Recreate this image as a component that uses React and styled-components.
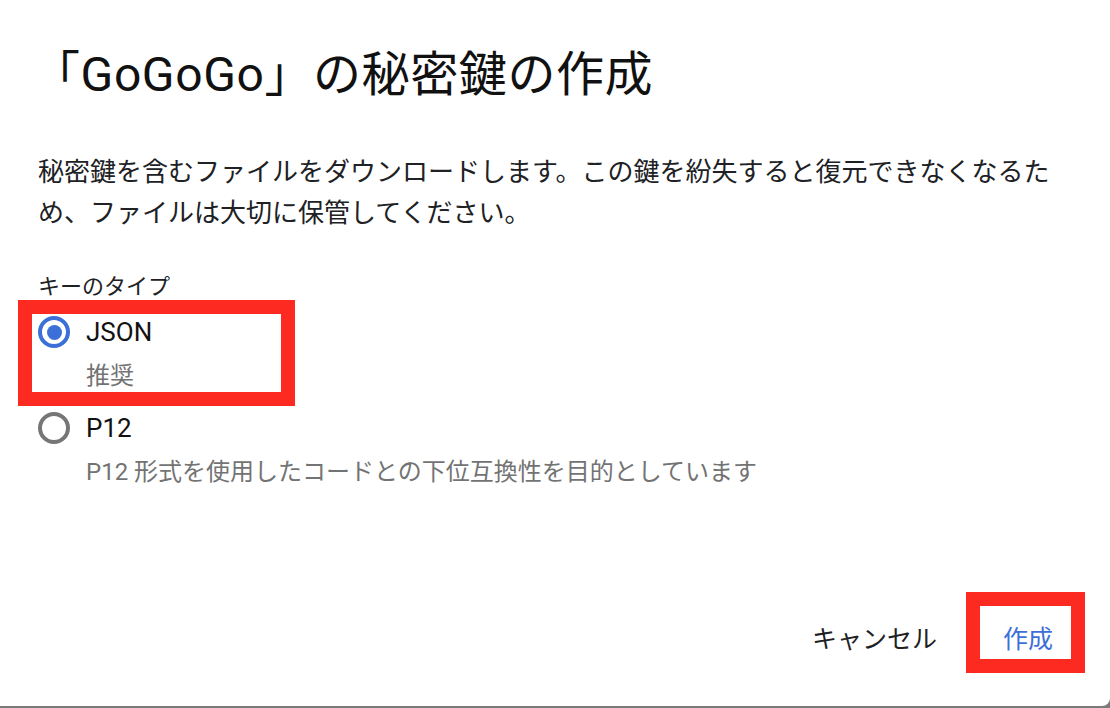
import React from 'react';
import styled, { createGlobalStyle } from 'styled-components';

const GlobalStyle = createGlobalStyle`
    html, body {
        margin: 0;
        padding: 0;
        background: #7b7b7b;
    }
    body {
        font-family: Roboto, "Noto Sans CJK JP", sans-serif;
        color: #202124;
    }
`;

function Radio({ checked, label, hint, highlight }) {
    return (
        <Option>
            {highlight && <Highlight style={highlight} />}
            <OptionRow>
                <RadioCircle checked={checked} />
                <OptionLabel>{label}</OptionLabel>
            </OptionRow>
            <OptionHint>{hint}</OptionHint>
        </Option>
    );
}

export default function App() {
    return (
        <>
            <GlobalStyle />
            <Dialog>
                <Title>「GoGoGo」の秘密鍵の作成</Title>
                <Description>
                    秘密鍵を含むファイルをダウンロードします。この鍵を紛失すると復元できなくなるため、ファイルは大切に保管してください。
                </Description>
                <Fieldset>
                    <Legend>キーのタイプ</Legend>
                    <Radio
                        checked
                        label="JSON"
                        hint="推奨"
                        highlight={{ top: -16, left: -20, width: 277, height: 106 }}
                    />
                    <Radio
                        label="P12"
                        hint="P12 形式を使用したコードとの下位互換性を目的としています"
                    />
                </Fieldset>
                <Footer>
                    <Button>キャンセル</Button>
                    <Button primary>
                        作成
                        <Highlight style={{ top: -17, left: -21, width: 119, height: 81 }} />
                    </Button>
                </Footer>
            </Dialog>
        </>
    );
}

const Dialog = styled.div`
    box-sizing: border-box;
    width: 1110px;
    height: 706px;
    background: #fff;
    border-bottom-right-radius: 8px;
    display: flex;
    flex-direction: column;
    padding: 47px 48px 41px 38px;
`;

const Title = styled.h1`
    margin: 0;
    font-size: 48px;
    line-height: 56px;
    font-weight: 400;
    letter-spacing: 0.6px;
    margin-left: -6px;
    color: #111;
`;

const Description = styled.p`
    margin: 49px 0 0;
    font-size: 26px;
    line-height: 41px;
    max-width: 1024px;
    color: #202124;
`;

const Fieldset = styled.div`
    margin-top: 38px;
    display: flex;
    flex-direction: column;
`;

const Legend = styled.div`
    font-size: 22px;
    line-height: 30px;
    color: #202124;
`;

const Option = styled.div`
    position: relative;
    display: flex;
    flex-direction: column;
    margin-top: 14px;

    & + & {
        margin-top: 21px;
    }
`;

const OptionRow = styled.div`
    display: flex;
    align-items: center;
    gap: 16px;
    height: 32px;
`;

const RadioCircle = styled.span`
    box-sizing: border-box;
    width: 32px;
    height: 32px;
    border-radius: 50%;
    border: 4px solid ${p => (p.checked ? '#3c6fd8' : '#767676')};
    display: flex;
    align-items: center;
    justify-content: center;

    &::after {
        content: '';
        width: 15px;
        height: 15px;
        border-radius: 50%;
        background: ${p => (p.checked ? '#3c6fd8' : 'transparent')};
    }
`;

const OptionLabel = styled.span`
    font-size: 26px;
    color: #111;
`;

const OptionHint = styled.div`
    margin: 13px 0 0 48px;
    font-size: 24px;
    line-height: 30px;
    color: #737373;
`;

const Footer = styled.div`
    margin-top: auto;
    display: flex;
    justify-content: flex-end;
    gap: 34px;
    margin-right: -7px;
`;

const Button = styled.button`
    position: relative;
    height: 56px;
    padding: 0 16px;
    border: none;
    background: none;
    font-family: Roboto, "Noto Sans CJK JP", sans-serif;
    font-size: 25px;
    color: ${p => (p.primary ? '#3c6fd8' : '#202124')};
    cursor: pointer;
`;

const Highlight = styled.span`
    position: absolute;
    box-sizing: border-box;
    border: 14px solid #fc2a20;
    pointer-events: none;
`;
